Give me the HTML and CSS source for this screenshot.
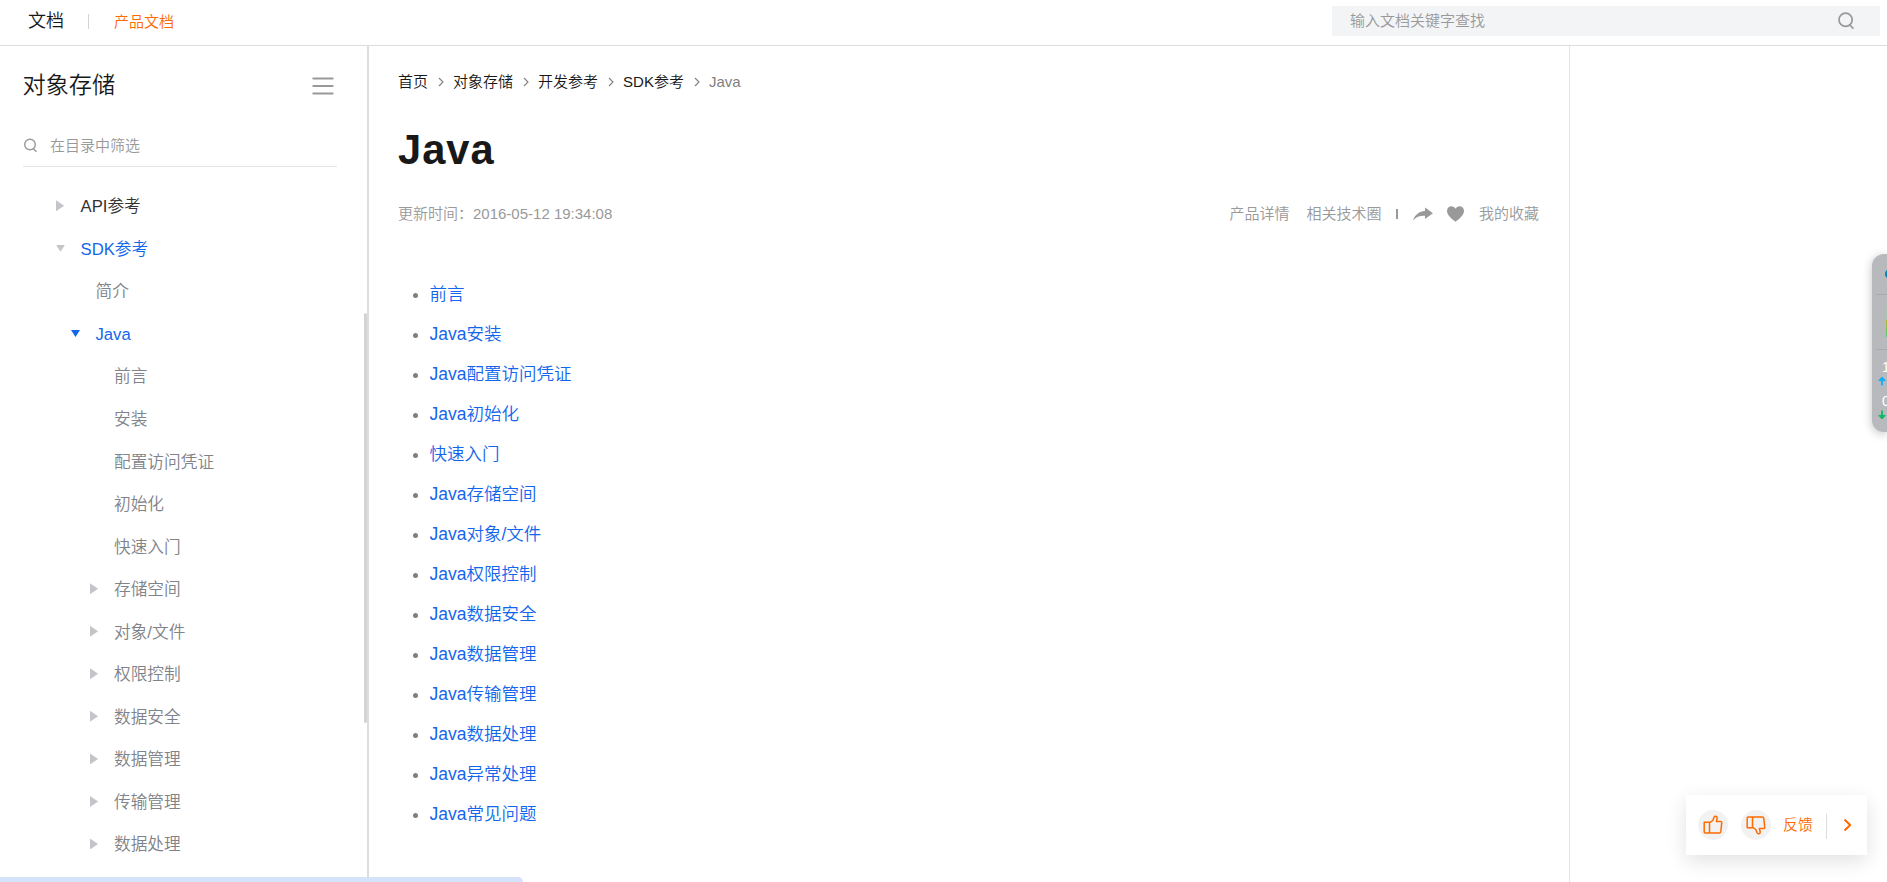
FILE: index.html
```html
<!DOCTYPE html>
<html lang="zh-CN">
<head>
<meta charset="utf-8">
<title>Java - 对象存储</title>
<link rel="stylesheet" href="styles.css">
</head>
<body>
<header class="topbar">
  <span class="brand">文档</span>
  <span class="brand-divider"></span>
  <a class="nav-active">产品文档</a>
  <div class="search">
    <span>输入文档关键字查找</span>
    <svg width="18" height="18" viewBox="0 0 18 18" fill="none" stroke="#999" stroke-width="1.7"><ellipse cx="8.6" cy="7.8" rx="6.6" ry="6.6"/><path d="M12.4 12.6l4 4"/></svg>
  </div>
</header>
<div class="layout">
  <aside class="sidebar">
    <div class="side-head">
      <h2>对象存储</h2>
      <svg width="22" height="20" viewBox="0 0 22 20" stroke="#999" stroke-width="2.2" stroke-linecap="round"><path d="M1.4 2.5h19.2M1.4 10h19.2M1.4 17.5h19.2"/></svg>
    </div>
    <div class="filter">
      <svg width="15" height="15" viewBox="0 0 15 15" fill="none" stroke="#999" stroke-width="1.4"><circle cx="7" cy="6.5" r="5.3"/><path d="M10.3 10.8l3.2 3"/></svg>
      <span>在目录中筛选</span>
    </div>
    <ul class="tree">
      <li class="l1 dark"><i class="right"></i><span>API参考</span></li>
      <li class="l1 active"><i class="down"></i><span>SDK参考</span></li>
      <li class="l2"><i></i><span>简介</span></li>
      <li class="l2 active current"><i class="down"></i><span>Java</span></li>
      <li class="l3"><i></i><span>前言</span></li>
      <li class="l3"><i></i><span>安装</span></li>
      <li class="l3"><i></i><span>配置访问凭证</span></li>
      <li class="l3"><i></i><span>初始化</span></li>
      <li class="l3"><i></i><span>快速入门</span></li>
      <li class="l3"><i class="right"></i><span>存储空间</span></li>
      <li class="l3"><i class="right"></i><span>对象/文件</span></li>
      <li class="l3"><i class="right"></i><span>权限控制</span></li>
      <li class="l3"><i class="right"></i><span>数据安全</span></li>
      <li class="l3"><i class="right"></i><span>数据管理</span></li>
      <li class="l3"><i class="right"></i><span>传输管理</span></li>
      <li class="l3"><i class="right"></i><span>数据处理</span></li>
    </ul>
    <div class="scroll-thumb"></div>
  </aside>
  <main class="content">
    <nav class="crumbs">
      <a>首页</a><svg class="sep" viewBox="0 0 6 10"><path d="M1 1l4 4-4 4"/></svg>
      <a>对象存储</a><svg class="sep" viewBox="0 0 6 10"><path d="M1 1l4 4-4 4"/></svg>
      <a>开发参考</a><svg class="sep" viewBox="0 0 6 10"><path d="M1 1l4 4-4 4"/></svg>
      <a>SDK参考</a><svg class="sep" viewBox="0 0 6 10"><path d="M1 1l4 4-4 4"/></svg>
      <span>Java</span>
    </nav>
    <h1>Java</h1>
    <div class="meta">
      <span class="updated">更新时间：2016-05-12 19:34:08</span>
      <span>产品详情</span>
      <span class="circle-link">相关技术圈</span>
      <span class="bar"></span>
      <svg class="share" width="20" height="14" viewBox="0 0 20 14" fill="#999"><path d="M12 0.5L20 6.3 12 12V8.7C7 8.4 3.5 9.8 0 13.2 2 7.5 6.2 4.2 12 3.9z"/></svg>
      <svg class="heart" width="17" height="16" viewBox="0 0 17 16" fill="#999"><path d="M8.5 15.7C6.5 14.2 0 9.8 0 5 0 2.2 2 .3 4.4.3c1.8 0 3.3 1 4.1 2.5C9.3 1.3 10.8.3 12.6.3 15 .3 17 2.2 17 5c0 4.8-6.5 9.2-8.5 10.7z"/></svg>
      <span>我的收藏</span>
    </div>
    <ul class="links">
      <li><a>前言</a></li>
      <li><a>Java安装</a></li>
      <li><a>Java配置访问凭证</a></li>
      <li><a>Java初始化</a></li>
      <li><a>快速入门</a></li>
      <li><a>Java存储空间</a></li>
      <li><a>Java对象/文件</a></li>
      <li><a>Java权限控制</a></li>
      <li><a>Java数据安全</a></li>
      <li><a>Java数据管理</a></li>
      <li><a>Java传输管理</a></li>
      <li><a>Java数据处理</a></li>
      <li><a>Java异常处理</a></li>
      <li><a>Java常见问题</a></li>
    </ul>
  </main>
</div>
<div class="load-bar"></div>
<div class="monitor">
  <div class="cell dot-cell"><span class="dot"></span></div>
  <div class="cell strip-cell"><span class="strip"></span></div>
  <div class="rate"><b>1</b><svg width="8" height="10" viewBox="0 0 8 10" stroke="#12adfb" fill="#12adfb"><path d="M4 9.5V3" stroke-width="1.8"/><path d="M.8 4.6L4 1l3.2 3.6z"/></svg></div>
  <div class="rate"><b>0</b><svg width="8" height="10" viewBox="0 0 8 10" stroke="#0fb866" fill="#0fb866"><path d="M4 .5V7" stroke-width="1.8"/><path d="M.8 5.4L4 9l3.2-3.6z"/></svg></div>
</div>
<div class="feedback">
  <span class="thumb"><svg width="20" height="20" viewBox="0 0 20 20"><path d="M1.200 7.200H7.400L9.800 5.500 11 2.200c.8-1.700 3.400-1.200 3.200.8L13.400 6.400h3.800q1.700 0 1.500 1.700L17.800 16.700q-.2 1.300-1.500 1.300H2.200q-1 0-1-1zM6.500 7.200v10.800"/></svg></span>
  <span class="thumb second"><svg width="20" height="20" viewBox="0 0 20 20"><path d="M1.200 12.800H7.400L9.800 14.500 11 17.800c.8 1.700 3.400 1.200 3.200-.8L13.400 13.600h3.800q1.700 0 1.500-1.700L17.800 3.300q-.2-1.300-1.500-1.300H2.200q-1 0-1 1zM6.500 12.800v-10.800"/></svg></span>
  <span class="label">反馈</span>
  <span class="fb-line"></span>
  <svg class="fb-arrow" width="9" height="14" viewBox="0 0 9 14"><path d="M1.500 1.500L7.200 7l-5.700 5.500"/></svg>
</div>
</body>
</html>
```
FILE: styles.css
```css
* { box-sizing: border-box; }
html, body { height: 100%; }
body {
  margin: 0;
  overflow: hidden;
  background: #fff;
  color: #181818;
  font: 350 15px/20px "Liberation Sans", "Noto Sans CJK SC DemiLight", "Noto Sans CJK SC", sans-serif;
  display: flex;
  flex-direction: column;
}
ul { list-style: none; margin: 0; padding: 0; }
h1, h2 { margin: 0; }

.topbar {
  flex: none;
  height: 46px;
  border-bottom: 1px solid #ddd;
  display: flex;
  align-items: flex-start;
  padding: 6px 7px 0 28px;
}
.brand { font-size: 18px; line-height: 30px; width: 60px; }
.brand-divider { width: 1px; height: 15px; background: #d4d4d4; margin: 8px 25px 0 0; }
.nav-active { color: #ff6a00; line-height: 31px; }
.search {
  width: 548px;
  height: 30px;
  margin-left: auto;
  padding: 0 25px 0 18px;
  background: #f3f4f6;
  color: #999;
  display: flex;
  align-items: center;
  justify-content: space-between;
}

.layout { flex: 1; min-height: 0; display: flex; }
.sidebar {
  position: relative;
  flex: none;
  width: 369px;
  overflow: hidden;
  border-right: 2px solid #ddd;
}
.side-head {
  display: flex;
  align-items: center;
  justify-content: space-between;
  padding: 24px 33px 0 22.5px;
  height: 56px;
}
.side-head h2 { font-size: 23.2px; font-weight: 350; line-height: 32px; padding-bottom: 2px; }
.filter {
  display: flex;
  align-items: center;
  gap: 12px;
  margin: 23px 30px 0 23px;
  height: 42px;
  color: #999;
  border-bottom: 1px solid #e3e4e6;
}
.tree { padding-top: 17.5px; font-size: 16.7px; color: #808389; }
.tree li { display: flex; align-items: center; height: 42.56px; }
.tree span { padding-top: 3px; }
.tree i { flex: none; width: 9px; height: 11px; }
.l1 { padding-left: 56px; }
.l1 i { margin-right: 15.5px; }
.l2 { padding-left: 71px; }
.l2 i { margin-right: 15.5px; }
.l3 { padding-left: 90px; }
.l3 i { margin-right: 15px; }
.tree i.right { background: #c3c5c9; clip-path: polygon(0 0, 90% 50%, 0 100%); }
.tree i.down { height: 7px; background: #c3c5c9; clip-path: polygon(0 0, 100% 0, 50% 100%); }
.tree .current i.down { background: #1366ec; }
.tree .dark { color: #333; }
.tree .active { color: #1366ec; }
.scroll-thumb {
  position: absolute;
  right: 0;
  top: 267px;
  width: 3px;
  height: 410px;
  border-radius: 2px;
  background: #d4d4d4;
}

.content {
  flex: none;
  width: 1201px;
  padding: 26px 30px 0 29px;
  border-right: 1px solid #e5e5e5;
}
.crumbs { display: flex; align-items: center; height: 20px; }
.sep { width: 6px; height: 10px; margin: 0 9px 0 10px; fill: none; stroke: #808080; stroke-width: 1.1; }
.crumbs span { color: #808080; }
h1 { font-size: 41.67px; line-height: 50px; margin-top: 33px; letter-spacing: 1px; }
.meta { display: flex; align-items: center; height: 22px; margin-top: 28px; color: #999; }
.updated { margin-right: auto; }
.circle-link { margin-left: 17px; }
.bar { width: 2px; height: 10px; background: #999; margin: 0 15px; }
.heart { margin: 0 14.5px 0 14px; }
.links { margin-top: 49px; font-size: 17.5px; }
.links li { display: flex; align-items: center; height: 40px; padding-left: 15px; color: #1366ec; }
.links li::before {
  content: "";
  width: 5px;
  height: 5px;
  margin: 3px 11.5px 0 0;
  border-radius: 50%;
  background: #808080;
}

.load-bar {
  position: absolute;
  left: 0;
  bottom: 0;
  width: 523px;
  height: 5px;
  border-radius: 0 5px 0 0;
  background: #d5e2fb;
}

.monitor {
  position: absolute;
  left: 1872px;
  top: 254px;
  width: 15px;
  height: 178px;
  overflow: hidden;
  border-radius: 12px 0 0 12px;
  background: #b8b9bd;
  box-shadow: 0 2px 10px rgba(0, 0, 0, .25);
}
.cell { margin-left: 4px; border-bottom: 1px solid #a3abae; }
.dot-cell { height: 41px; padding: 15px 0 0 9px; }
.dot { display: block; width: 10px; height: 10px; border-radius: 50%; background: #087fae; }
.strip-cell { height: 55px; padding: 11px 0 0 10px; }
.strip { display: block; height: 31px; background: linear-gradient(#a9c3b0 45%, #b9b82d 47%, #56c77d); }
.rate { width: 15px; height: 34px; padding: 9px 0 0 6px; }
.rate b { display: block; width: 10px; height: 17px; margin-left: 4px; font: 400 14px/17px "Liberation Sans", sans-serif; color: #fff; }
.rate svg { display: block; }

.feedback {
  position: absolute;
  left: 1686px;
  top: 795px;
  width: 181px;
  height: 60px;
  padding-left: 12px;
  display: flex;
  align-items: center;
  background: #fff;
  color: #ff6a00;
  box-shadow: 0 6px 20px rgba(0, 0, 0, .12);
}
.thumb { display: flex; align-items: center; justify-content: center; width: 30px; height: 30px; border-radius: 50%; background: #f2f2f2; }
.thumb svg, .fb-arrow { fill: none; stroke: #ff6a00; stroke-width: 1.5; stroke-linejoin: round; }
.second { margin-left: 13px; }
.label { margin-left: 12px; }
.fb-line { width: 1px; height: 25px; margin: 3px 16px 0 13px; background: #ddd; }
.fb-arrow { stroke-width: 2; }
```
